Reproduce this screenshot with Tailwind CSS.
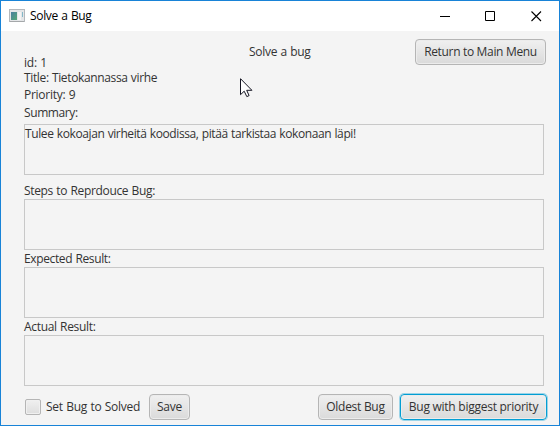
<!DOCTYPE html>
<html lang="fi">
<head>
<meta charset="utf-8">
<title>Solve a Bug</title>
<script src="https://cdn.jsdelivr.net/npm/@tailwindcss/browser@4"></script>
</head>
<body class="w-[560px] h-[426px] overflow-hidden font-['Open_Sans','Noto_Sans',sans-serif] text-[12px] leading-4 text-[#333333] whitespace-nowrap [word-spacing:0.5px]">
<div class="relative w-[560px] h-[426px] border border-[#1883d7] bg-[#f4f4f4] flex flex-col">
  <header class="h-[30px] shrink-0 bg-white flex items-center text-black">
    <svg class="ml-2 w-4 h-[14px] shrink-0" viewBox="0 0 16 14" shape-rendering="crispEdges">
      <defs><linearGradient id="pane" x1="0" y1="0" x2="1" y2="1"><stop offset="0" stop-color="#4a7fa0"/><stop offset="1" stop-color="#55a876"/></linearGradient></defs>
      <rect x=".5" y=".5" width="15" height="12" fill="#e4e6e8" stroke="#b4b8bc"/>
      <rect x="2" y="3" width="6" height="8" fill="url(#pane)"/>
      <rect x="9" y="3" width="3" height="8" fill="#f4f4f4"/>
      <rect x="13" y="3" width="1" height="5" fill="#83b7c8"/>
      <rect x="1" y="12" width="14" height="1" fill="#a5a8aa"/>
    </svg>
    <h1 class="ml-[5px] tracking-[-0.32px]">Solve a Bug</h1>
    <svg class="ml-auto mr-[14px] w-[105px] h-[11px]" viewBox="0 0 105 11" fill="none" stroke="black">
      <path d="M0 5.5h10M45.5 .5h9v9h-9z"/><path d="M91.5 .5l9.5 9.5M101 .5l-9.5 9.5" stroke-width="1.1"/>
    </svg>
  </header>
  <main class="flex flex-col pl-[23px]">
    <section class="flex h-[93px] items-start">
      <div class="w-[225px] pt-6 flex flex-col">
        <p class="h-[15px] tracking-[-0.2px]">id: 1</p>
        <p class="h-[17px] tracking-[-0.36px]">Title: Tietokannassa virhe</p>
        <p class="h-[18px] tracking-[-0.26px]">Priority: 9</p>
        <p class="h-4 tracking-[-0.4px]">Summary:</p>
      </div>
      <p class="w-[166px] pt-[13px] tracking-[-0.28px]">Solve a bug</p>
      <button class="mt-2 w-[131px] h-[26px] rounded-[4px] border border-[#b5b5b5] bg-linear-to-b from-[#f0f0f0] to-[#dadada] shadow-[inset_0_0_0_1px_#ececec] tracking-[-0.33px]">Return to Main Menu</button>
    </section>
    <div class="w-[520px] h-[51px] border border-[#c8c8c8] pt-px tracking-[-0.39px]">Tulee kokoajan virheitä koodissa, pitää tarkistaa kokonaan läpi!</div>
    <p class="pt-2 h-6 tracking-[-0.33px]">Steps to Reprdouce Bug:</p>
    <div class="w-[520px] h-[51px] border border-[#c8c8c8]"></div>
    <p class="pt-px h-[17px] tracking-[-0.37px]">Expected Result:</p>
    <div class="w-[520px] h-[51px] border border-[#c8c8c8]"></div>
    <p class="pt-px h-[17px] tracking-[-0.32px]">Actual Result:</p>
    <div class="w-[520px] h-[51px] border border-[#c8c8c8]"></div>
    <footer class="mt-2 h-[26px] flex items-center">
      <label class="flex w-[125px] items-center tracking-[-0.26px]"><i class="ml-px mr-[5px] size-4 rounded-[2px] border border-[#b5b5b5] bg-linear-to-b from-[#f0f0f0] to-[#dedede] shadow-[inset_0_0_0_1px_#f0f0f0]"></i>Set Bug to Solved</label>
      <button class="w-[41px] h-[26px] rounded-[4px] border border-[#b5b5b5] bg-linear-to-b from-[#f0f0f0] to-[#dadada] shadow-[inset_0_0_0_1px_#ececec] tracking-[-0.2px]">Save</button>
      <button class="ml-[128px] w-[75px] h-[26px] rounded-[4px] border border-[#b5b5b5] bg-linear-to-b from-[#f0f0f0] to-[#dadada] shadow-[inset_0_0_0_1px_#ececec] tracking-[-0.28px]">Oldest Bug</button>
      <button class="ml-[7px] w-[147px] h-[26px] rounded-[4px] border border-[#039ed3] bg-linear-to-b from-[#f0f0f0] to-[#dadada] shadow-[inset_0_0_0_1px_#ececec,0_0_0_1px_#9bd4e8] tracking-[-0.26px]">Bug with biggest priority</button>
    </footer>
  </main>
  <svg class="absolute left-[239px] top-[77px] w-[13px] h-[20px]" viewBox="0 0 13 20"><path d="M.5 .7v16l3.7-3.5 2.6 5.4 2.3-1-2.4-5.3h5.2z" fill="white" stroke="#151522"/></svg>
</div>
</body>
</html>
